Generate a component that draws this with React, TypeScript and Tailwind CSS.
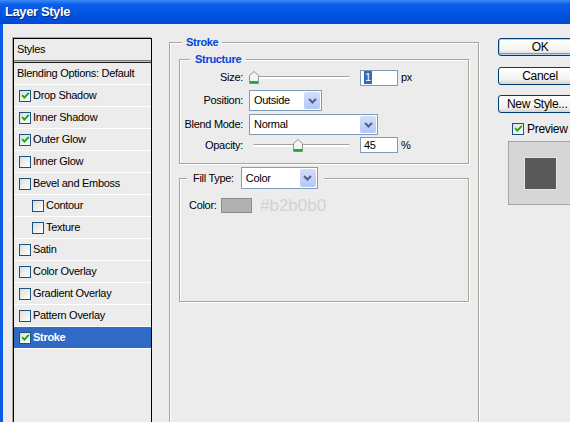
import React from 'react'

const items: { label: string; checked?: boolean; sub?: boolean; selected?: boolean }[] = [
  { label: 'Drop Shadow', checked: true },
  { label: 'Inner Shadow', checked: true },
  { label: 'Outer Glow', checked: true },
  { label: 'Inner Glow' },
  { label: 'Bevel and Emboss' },
  { label: 'Contour', sub: true },
  { label: 'Texture', sub: true },
  { label: 'Satin' },
  { label: 'Color Overlay' },
  { label: 'Gradient Overlay' },
  { label: 'Pattern Overlay' },
  { label: 'Stroke', checked: true, selected: true },
]

const Check = ({ checked }: { checked?: boolean }) => (
  <span className="flex h-[12px] w-[12px] shrink-0 items-center justify-center border border-[#1c5180] bg-[linear-gradient(135deg,#dcdcd7,#ffffff)]">
    {checked && (
      <svg width="9" height="9" viewBox="0 0 9 9">
        <path d="M1.2 4.2 L3.4 6.6 L7.8 1.8" fill="none" stroke="#21a121" strokeWidth="1.9" />
      </svg>
    )}
  </span>
)

const Select = ({ text, className }: { text: string; className: string }) => (
  <div className={`flex shrink-0 items-stretch border border-[#7f9db9] bg-white ${className}`}>
    <span className="flex flex-1 items-center pl-[4px] text-[11px] text-black">{text}</span>
    <span className="m-[1px] flex w-[16px] items-center justify-center rounded-[2px] bg-[linear-gradient(180deg,#d2def9,#b3c8f6)]">
      <svg width="9" height="6" viewBox="0 0 9 6">
        <path d="M1 1 L4.5 4.5 L8 1" fill="none" stroke="#4d6185" strokeWidth="2" />
      </svg>
    </span>
  </div>
)

const Slider = ({ pos, trackLeft }: { pos: number; trackLeft: number }) => (
  <div className="relative h-full w-[103px] shrink-0">
    <div
      className="absolute right-[2px] top-[7px] h-[3px] rounded-full border-t border-[#a3a39b] bg-white"
      style={{ left: trackLeft }}
    />
    <svg className="absolute top-[2px]" style={{ left: pos }} width="10" height="13" viewBox="0 0 10 13">
      <path d="M0.5 4.5 L5 0.5 L9.5 4.5 L9.5 12.5 L0.5 12.5 Z" fill="#f4f4f0" stroke="#8a9a8a" />
      <rect x="1" y="10" width="8" height="2.5" fill="#21a839" />
    </svg>
  </div>
)

const Input = ({ children }: { children: React.ReactNode }) => (
  <div className="ml-[8px] flex h-[16px] w-[38px] shrink-0 items-center border border-[#7f9db9] bg-white pl-[3px] text-[11px]">
    {children}
  </div>
)

const Label = ({ children }: { children: React.ReactNode }) => (
  <span className="mr-[6px] w-[63px] shrink-0 text-right text-[11px] text-black">{children}</span>
)

const Button = ({ children, def, className }: { children: React.ReactNode; def?: boolean; className?: string }) => (
  <div
    className={`flex h-[18px] w-[84px] shrink-0 items-center justify-center rounded-[3px] border border-[#003c74] bg-[linear-gradient(180deg,#ffffff,#f3f3ef_70%,#d8d4c9)] text-[12px] text-black ${
      def ? 'shadow-[inset_0_0_0_1px_#b9d1f4,inset_0_-1px_0_1px_#6f97d9]' : ''
    } ${className ?? ''}`}
  >
    {children}
  </div>
)

export default function App() {
  return (
    <div className="h-[422px] w-[570px] overflow-hidden bg-[#ececec] font-['Liberation_Sans',Arial,sans-serif] tracking-[-0.3px]">
      <div className="flex h-[24px] items-center bg-[linear-gradient(180deg,#3d8bf7_0%,#0b5ee8_18%,#0054e3_60%,#0049d4_100%)] pl-[5px]">
        <span className="text-[13px] font-bold tracking-[-0.4px] text-white [text-shadow:1px_1px_0_#0a2a80]">Layer Style</span>
      </div>
      <div className="flex h-[398px]">
        <div className="w-[3px] shrink-0 bg-[#0b5ce6]" />
        <div className="flex flex-1 pl-[10px]">
          {/* styles list */}
          <div className="mt-[14px] h-[400px] w-[139px] shrink-0 border border-black shadow-[-1px_-1px_0_#aca899] text-[11px] text-black">
            <div className="flex h-[21px] items-center pl-[3px]">Styles</div>
            <div className="h-[3px] border-t border-[#7a7a7a] border-b border-b-[#222] bg-[#bdbdbd]" />
            <div className="flex h-[22px] items-center border-b border-white pl-[3px]">Blending Options: Default</div>
            {items.map((it) => (
              <div
                key={it.label}
                className={`flex h-[22px] items-center gap-[2px] border-b border-white ${it.sub ? 'pl-[18px]' : 'pl-[5px]'} ${
                  it.selected ? 'bg-[#316ac5] font-bold text-white' : ''
                }`}
              >
                <Check checked={it.checked} />
                <span>{it.label}</span>
              </div>
            ))}
          </div>

          {/* stroke panel */}
          <fieldset className="ml-[17px] mt-[11px] h-[420px] w-[310px] shrink-0 border border-[#a7a69a] shadow-[inset_1px_1px_0_#fff,1px_1px_0_#fff]">
            <legend className="ml-[12px] bg-[#ececec] px-[4px] text-[11px] font-bold leading-[14px] text-[#0046d5]">Stroke</legend>
            <div className="px-[9px] pt-[3px]">
              <fieldset className="border border-[#a7a69a] shadow-[inset_1px_1px_0_#fff,1px_1px_0_#fff]">
                <legend className="ml-[10px] bg-[#ececec] px-[5px] text-[11px] font-bold leading-[14px] text-[#0046d5]">Structure</legend>
                <div className="pb-[10px] pt-[3px]">
                  <div className="flex h-[17px] items-center">
                    <Label>Size:</Label>
                    <Slider pos={0} trackLeft={4} />
                    <Input>
                      <span className="bg-[#316ac5] px-[1px] leading-[13px] text-white">1</span>
                    </Input>
                    <span className="ml-[3px] text-[11px]">px</span>
                  </div>
                  <div className="mt-[4px] flex h-[21px] items-center">
                    <Label>Position:</Label>
                    <Select text="Outside" className="h-[21px] w-[73px]" />
                  </div>
                  <div className="mt-[3px] flex h-[21px] items-center">
                    <Label>Blend Mode:</Label>
                    <Select text="Normal" className="h-[21px] w-[129px]" />
                  </div>
                  <div className="mt-[2px] flex h-[16px] items-center">
                    <Label>Opacity:</Label>
                    <Slider pos={44} trackLeft={4} />
                    <Input>45</Input>
                    <span className="ml-[3px] text-[11px]">%</span>
                  </div>
                </div>
              </fieldset>

              <fieldset className="mt-[3px] border border-[#a7a69a] shadow-[inset_1px_1px_0_#fff,1px_1px_0_#fff]">
                <legend className="ml-[7px] flex items-center bg-[#ececec] px-[6px]">
                  <span className="mr-[7px] text-[11px] text-black">Fill Type:</span>
                  <Select text="Color" className="h-[22px] w-[77px]" />
                </legend>
                <div className="h-[112px] pl-[9px] pt-[9px]">
                  <div className="flex h-[15px] items-center">
                    <span className="w-[32px] text-[11px] text-black">Color:</span>
                    <span className="h-[15px] w-[31px] border border-[#8c8c8c] bg-[#b2b0b0]" />
                    <span className="ml-[8px] text-[17px] tracking-normal text-[#d2d2d2]">#b2b0b0</span>
                  </div>
                </div>
              </fieldset>
            </div>
          </fieldset>

          {/* buttons */}
          <div className="ml-[19px] mt-[14px] flex w-[84px] shrink-0 flex-col">
            <Button def>OK</Button>
            <Button className="mt-[11px]">Cancel</Button>
            <Button className="mt-[10px] justify-start pl-[8px]">New Style...</Button>
            <div className="mt-[9px] flex h-[13px] items-center gap-[3px] pl-[14px]">
              <Check checked />
              <span className="text-[12px] text-black">Preview</span>
            </div>
            <div className="ml-[10px] mt-[6px] flex h-[64px] w-[64px] shrink-0 items-center justify-center border border-[#a7a69a] bg-[#d6d6d6]">
              <div className="h-[33px] w-[33px] border border-[#e6e6e6] bg-[#595959]" />
            </div>
          </div>
        </div>
      </div>
    </div>
  )
}
